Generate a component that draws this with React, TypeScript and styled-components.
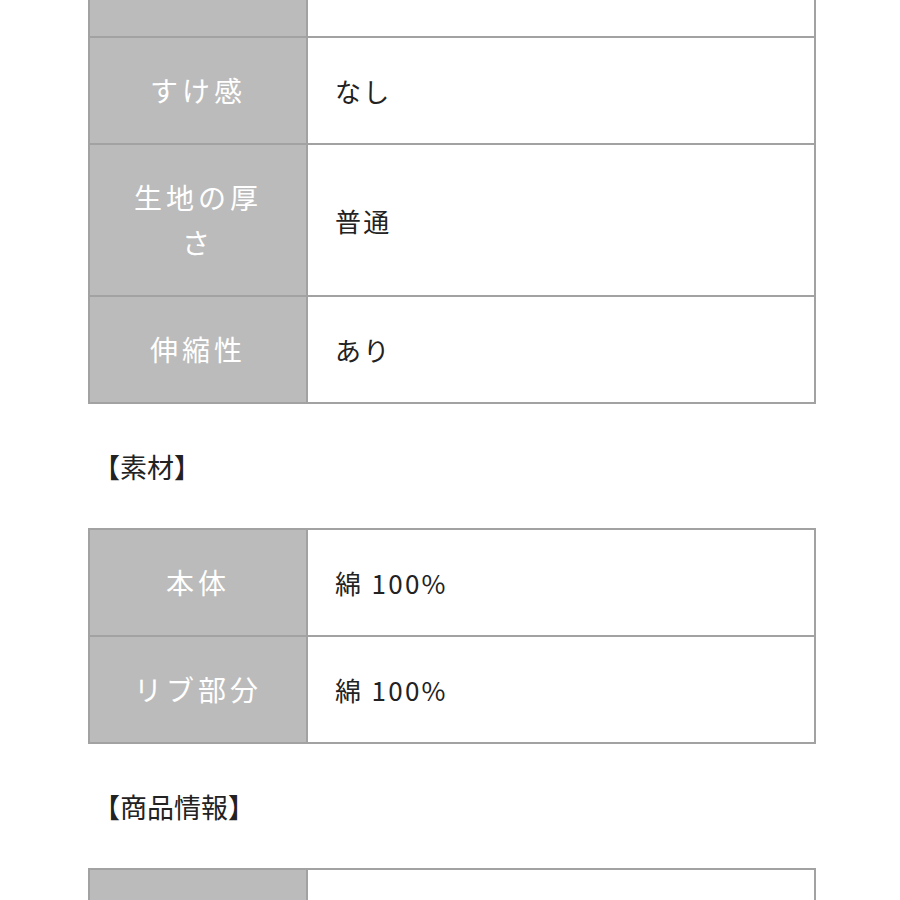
import React from "react";
import styled, { createGlobalStyle } from "styled-components";

const Global = createGlobalStyle`
  html, body { margin: 0; padding: 0; background: #ffffff; }
  body { font-family: "Noto Sans CJK JP", "Noto Sans", sans-serif; color: #222222; }
`;

const Page = styled.div`
  width: 900px;
  height: 900px;
  overflow: hidden;
  padding-left: 88px;
  box-sizing: border-box;
`;

const Scroll = styled.div`
  margin-top: -71px;
`;

const Table = styled.table`
  width: 728px;
  border-collapse: collapse;
  table-layout: fixed;
`;

const Label = styled.th`
  width: 218px;
  box-sizing: border-box;
  background: #bbbbbb;
  border: 2px solid #a2a2a2;
  padding: 30px 34px;
  font-weight: 400;
  font-size: 28px;
  line-height: 45px;
  letter-spacing: 4px;
  color: #ffffff;
  text-align: center;
  vertical-align: middle;
`;

const Value = styled.td`
  border: 2px solid #a2a2a2;
  padding: 30px 27px;
  font-size: 26px;
  line-height: 45px;
  letter-spacing: 2.3px;
  color: #222222;
  text-align: left;
  vertical-align: middle;
`;

const Heading = styled.h3`
  margin: 40px 0 39px;
  padding-left: 5px;
  font-size: 27px;
  line-height: 45px;
  font-weight: 400;
  color: #222222;
  letter-spacing: 0;
`;

type Row = { label: string; value: string };

const SpecTable = ({ rows }: { rows: Row[] }) => (
  <Table>
    <tbody>
      {rows.map((r, i) => (
        <tr key={i}>
          <Label>{r.label || "\u00a0"}</Label>
          <Value>{r.value || "\u00a0"}</Value>
        </tr>
      ))}
    </tbody>
  </Table>
);

export default function App() {
  return (
    <>
      <Global />
      <Page>
        <Scroll>
          <SpecTable
            rows={[
              { label: "", value: "" },
              { label: "すけ感", value: "なし" },
              { label: "生地の厚さ", value: "普通" },
              { label: "伸縮性", value: "あり" },
            ]}
          />
          <Heading>【素材】</Heading>
          <SpecTable
            rows={[
              { label: "本体", value: "綿 100%" },
              { label: "リブ部分", value: "綿 100%" },
            ]}
          />
          <Heading>【商品情報】</Heading>
          <SpecTable
            rows={[
              { label: "", value: "" },
              { label: "", value: "" },
            ]}
          />
        </Scroll>
      </Page>
    </>
  );
}
